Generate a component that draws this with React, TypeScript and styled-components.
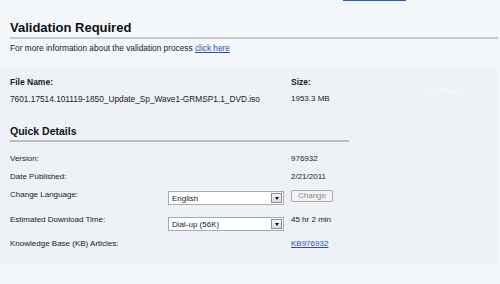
import React from "react";
import styled, { createGlobalStyle } from "styled-components";

const GlobalStyle = createGlobalStyle`
  html, body {
    margin: 0;
    padding: 0;
    background: #f4f7fa;
  }
  body {
    width: 500px;
    height: 284px;
    overflow: hidden;
    font-family: "Liberation Sans", Arial, sans-serif;
    font-size: 8px;
    color: #1a1a1a;
  }
`;

const TopLink = styled.div`
  width: 63px;
  height: 1px;
  margin-left: 343px;
  background: #2b5cc0;
`;

const Header = styled.div`
  padding: 19px 2px 0 10px;
`;

const Title = styled.h1`
  margin: 0;
  font-size: 13px;
  line-height: 15px;
  font-weight: 700;
  color: #111;
`;

const Rule = styled.div<{ $width?: string; $color?: string }>`
  width: ${(p) => p.$width ?? "100%"};
  height: 2px;
  background: ${(p) => p.$color ?? "#c8c8c8"};
`;

const Info = styled.p`
  margin: 4px 0 0;
  font-size: 8.3px;
  line-height: 10px;
  & a {
    color: #2a4fb8;
    text-decoration: underline;
  }
`;

const Panel = styled.section`
  margin: 16px 2px 0 0;
  height: 195px;
  box-sizing: border-box;
  padding: 8px 0 0 10px;
  background: #eef1f5;
`;

const FileGrid = styled.div`
  display: grid;
  grid-template-columns: 281px 123px 1fr;
  grid-template-rows: 10px 10px;
  row-gap: 7px;
  line-height: 10px;
`;

const Label = styled.div<{ $bold?: boolean; $size?: number }>`
  font-weight: ${(p) => (p.$bold ? 700 : 400)};
  font-size: ${(p) => p.$size ?? (p.$bold ? 8.5 : 8)}px;
  line-height: 10px;
  white-space: nowrap;
`;

const Continue = styled.div`
  grid-column: 3;
  grid-row: 1 / span 2;
  align-self: center;
  padding-left: 13px;
  color: #fafbfd;
  font-size: 8px;
`;

const SectionTitle = styled.h2`
  margin: 21px 0 0;
  font-size: 10.5px;
  line-height: 12px;
  font-weight: 700;
  color: #111;
`;

const Details = styled.div`
  margin-top: 12px;
`;

const Row = styled.div<{ $h: number }>`
  display: grid;
  grid-template-columns: 158px 123px 1fr;
  align-items: start;
  height: ${(p) => p.$h}px;
`;

const Select = styled.div<{ $top: number }>`
  margin-top: ${(p) => p.$top}px;
  width: 116px;
  height: 14px;
  box-sizing: border-box;
  border: 1px solid #a5acb5;
  background: #fff;
  display: flex;
  align-items: center;
  justify-content: space-between;
  padding: 0 1px 0 3px;
  font-size: 8px;
`;

const Arrow = styled.span`
  width: 11px;
  height: 10px;
  box-sizing: border-box;
  border: 1px solid #8c8c8c;
  background: linear-gradient(#f6f6f6, #dcdcdc);
  display: flex;
  align-items: center;
  justify-content: center;
  &::after {
    content: "";
    border-left: 2.5px solid transparent;
    border-right: 2.5px solid transparent;
    border-top: 3px solid #111;
    margin-top: 1px;
  }
`;

const Button = styled.button`
  width: 42px;
  height: 12px;
  padding: 0;
  box-sizing: border-box;
  border: 1px solid #a8a8a8;
  border-radius: 2px;
  background: #f3f3f3;
  color: #8a8a8a;
  font-family: inherit;
  font-size: 8px;
  line-height: 10px;
`;

const Link = styled.a`
  color: #2a4fb8;
  text-decoration: underline;
  font-size: 8px;
  line-height: 10px;
`;

export default function App() {
  return (
    <>
      <GlobalStyle />
      <TopLink />
      <Header>
        <Title>Validation Required</Title>
        <Rule style={{ marginTop: 2 }} />
        <Info>
          For more information about the validation process <a href="#">click here</a>
        </Info>
      </Header>
      <Panel>
        <FileGrid>
          <Label $bold>File Name:</Label>
          <Label $bold>Size:</Label>
          <Continue>Continue</Continue>
          <Label $size={8.3}>7601.17514.101119-1850_Update_Sp_Wave1-GRMSP1.1_DVD.iso</Label>
          <Label>1953.3 MB</Label>
        </FileGrid>
        <SectionTitle>Quick Details</SectionTitle>
        <Rule $width="339px" $color="#bcbcbc" style={{ marginTop: 3 }} />
        <Details>
          <Row $h={18}>
            <Label>Version:</Label>
            <span />
            <Label>976932</Label>
          </Row>
          <Row $h={18}>
            <Label>Date Published:</Label>
            <span />
            <Label>2/21/2011</Label>
          </Row>
          <Row $h={25}>
            <Label>Change Language:</Label>
            <Select $top={1}>
              English
              <Arrow />
            </Select>
            <Button disabled>Change</Button>
          </Row>
          <Row $h={24}>
            <Label>Estimated Download Time:</Label>
            <Select $top={2}>
              Dial-up (56K)
              <Arrow />
            </Select>
            <Label>45 hr 2 min</Label>
          </Row>
          <Row $h={10}>
            <Label>Knowledge Base (KB) Articles:</Label>
            <span />
            <Link href="#">KB976932</Link>
          </Row>
        </Details>
      </Panel>
    </>
  );
}
